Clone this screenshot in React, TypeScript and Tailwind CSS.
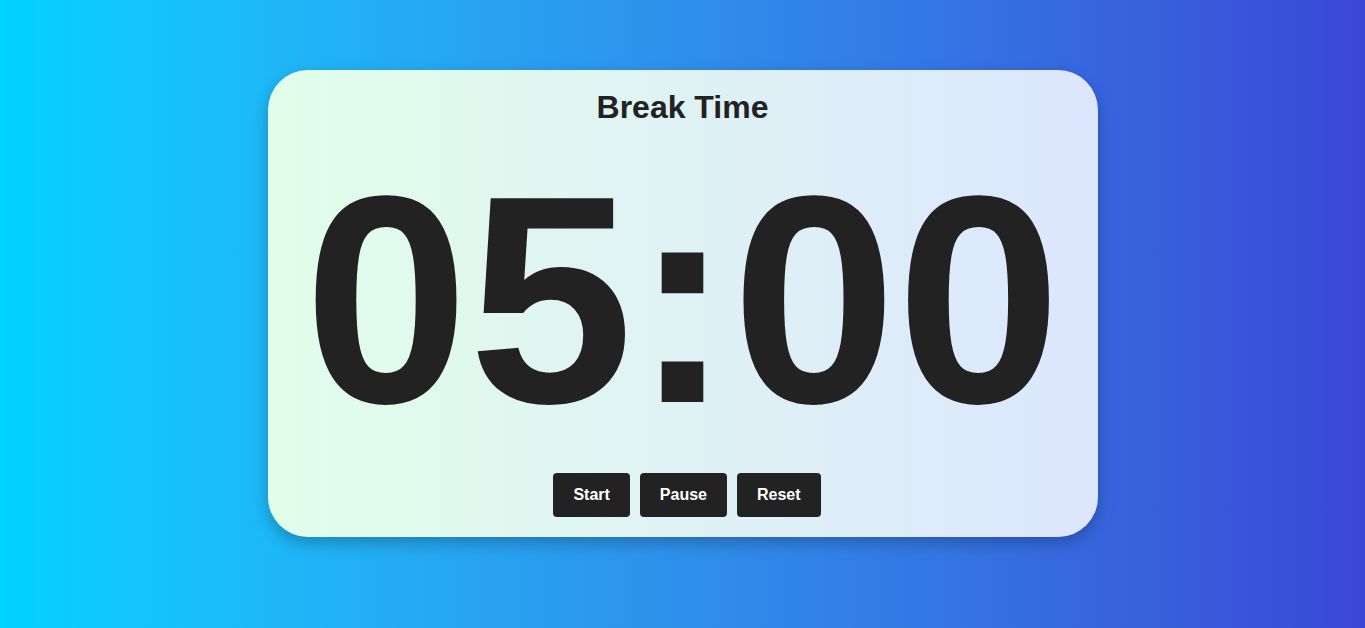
import React from "react";

const App = () => {
    return (
        <div className="w-full h-[628px] bg-gradient-to-r from-[#00d2ff] to-[#3a47d5] flex justify-center pt-[70px] font-['Liberation_Sans',Arial,sans-serif]">
            <div className="w-[830px] h-[467px] rounded-[40px] bg-gradient-to-r from-[#e1fee9] to-[#dce6fe] shadow-[0_6px_16px_rgba(0,0,0,0.25)] flex flex-col items-center pt-[19px]">
                <h1 className="text-[32px] leading-[36px] font-bold text-[#222]">Break Time</h1>

                <div className="mt-[27px] text-[296px] leading-[296px] font-bold text-[#222]">05:00</div>

                <div className="mt-[25px] ml-[9px] flex gap-[10px]">
                    <button className="h-[44px] px-5 rounded bg-[#222] text-white text-base font-bold">Start</button>
                    <button className="h-[44px] px-5 rounded bg-[#222] text-white text-base font-bold">Pause</button>
                    <button className="h-[44px] px-5 rounded bg-[#222] text-white text-base font-bold">Reset</button>
                </div>
            </div>
        </div>
    );
};

export default App;
